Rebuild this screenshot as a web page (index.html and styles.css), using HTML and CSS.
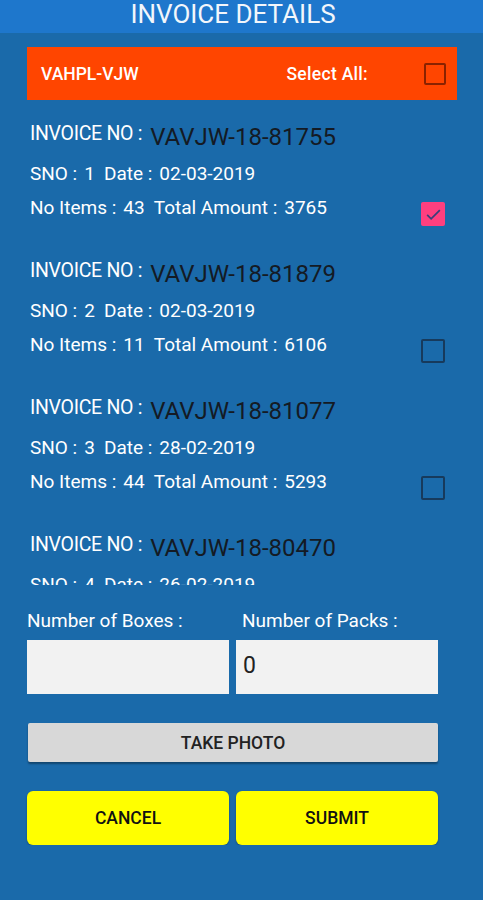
FILE: index.html
```html
<!DOCTYPE html>
<html lang="en">
<head>
    <meta charset="UTF-8">
    <meta name="viewport" content="width=device-width, initial-scale=1.0">
    <title>Invoice Details</title>
    <link rel="stylesheet" href="styles.css">
</head>
<body>
    <div class="header">
        <h1>INVOICE DETAILS</h1>
    </div>

    <div class="page">
        <div class="branch-bar">
            <span class="branch">VAHPL-VJW</span>
            <span class="select-all">Select All:</span>
            <span class="check check-dark"></span>
        </div>

        <div class="invoice-list">
            <div class="invoice">
                <div class="info">
                    <div class="row-no"><span class="label">INVOICE NO :</span><span class="number">VAVJW-18-81755</span></div>
                    <div class="row"><span>SNO :</span><span>1</span><span>Date :</span><span>02-03-2019</span></div>
                    <div class="row"><span>No Items :</span><span>43</span><span>Total Amount :</span><span>3765</span></div>
                </div>
                <span class="check check-on">
                    <svg viewBox="0 0 24 24" width="19" height="19"><path d="M4 12.5l5 5 11-11" fill="none" stroke="#3a3f7a" stroke-width="2.2"/></svg>
                </span>
            </div>
            <div class="invoice">
                <div class="info">
                    <div class="row-no"><span class="label">INVOICE NO :</span><span class="number">VAVJW-18-81879</span></div>
                    <div class="row"><span>SNO :</span><span>2</span><span>Date :</span><span>02-03-2019</span></div>
                    <div class="row"><span>No Items :</span><span>11</span><span>Total Amount :</span><span>6106</span></div>
                </div>
                <span class="check"></span>
            </div>
            <div class="invoice">
                <div class="info">
                    <div class="row-no"><span class="label">INVOICE NO :</span><span class="number">VAVJW-18-81077</span></div>
                    <div class="row"><span>SNO :</span><span>3</span><span>Date :</span><span>28-02-2019</span></div>
                    <div class="row"><span>No Items :</span><span>44</span><span>Total Amount :</span><span>5293</span></div>
                </div>
                <span class="check"></span>
            </div>
            <div class="invoice">
                <div class="info">
                    <div class="row-no"><span class="label">INVOICE NO :</span><span class="number">VAVJW-18-80470</span></div>
                    <div class="row"><span>SNO :</span><span>4</span><span>Date :</span><span>26-02-2019</span></div>
                    <div class="row"><span>No Items :</span><span>38</span><span>Total Amount :</span><span>4410</span></div>
                </div>
                <span class="check"></span>
            </div>
        </div>

        <div class="fields">
            <div class="field">
                <label for="boxes">Number of Boxes :</label>
                <input type="text" id="boxes">
            </div>
            <div class="field field-right">
                <label for="packs">Number of Packs :</label>
                <input type="text" id="packs" value="0">
            </div>
        </div>

        <button class="photo-btn">TAKE PHOTO</button>

        <div class="actions">
            <button class="yellow-btn">CANCEL</button>
            <button class="yellow-btn">SUBMIT</button>
        </div>
    </div>
</body>
</html>
```

FILE: styles.css
```css
body {
    margin: 0;
    background-color: #1a6aaa;
    font-family: Roboto, "Noto Sans", sans-serif;
    color: #fff;
}

.header {
    height: 33px;
    background-color: #1e77cc;
    text-align: center;
}

.header h1 {
    margin: 0;
    padding-right: 17px;
    font-size: 26px;
    font-weight: 400;
    line-height: 28px;
    color: #f2f6fb;
}

.page {
    padding: 14px 0 0 27px;
}

.branch-bar {
    display: flex;
    align-items: center;
    width: 430px;
    height: 53px;
    box-sizing: border-box;
    padding: 0 11px 0 14px;
    background-color: #ff4500;
    font-size: 17.5px;
    font-weight: 500;
}

.branch {
    flex: 1;
}

.select-all {
    margin-right: 56px;
    letter-spacing: 0.3px;
}

.check {
    display: flex;
    align-items: center;
    justify-content: center;
    width: 20px;
    height: 20px;
    border: 2px solid #173a5c;
    border-radius: 2px;
}

.check-dark {
    width: 18px;
    height: 18px;
    border-color: #8a2200;
}

.check-on {
    width: 24px;
    height: 24px;
    border: none;
    background-color: #ff3f7f;
}

.invoice-list {
    height: 473px;
    margin-top: 12px;
    overflow: hidden;
}

.invoice {
    display: flex;
    align-items: flex-start;
    height: 137px;
    width: 418px;
}

.info {
    flex: 1;
    padding: 11px 0 0 3px;
}

.row-no {
    display: flex;
    align-items: flex-start;
    height: 40px;
}

.label {
    font-size: 19.5px;
    line-height: 22px;
    margin-right: 8px;
    letter-spacing: -0.3px;
}

.number {
    font-size: 24px;
    line-height: 28px;
    color: #141a24;
}

.row {
    display: flex;
    gap: 7px;
    height: 34px;
    font-size: 19px;
    line-height: 22px;
}

.row span:nth-child(2) {
    margin-right: 2px;
}

.invoice .check {
    margin-top: 90px;
}

.fields {
    display: flex;
    gap: 7px;
    margin-top: 25px;
}

.field {
    display: flex;
    flex-direction: column;
    width: 202px;
}

.field label {
    font-size: 19px;
    line-height: 22px;
    margin-bottom: 8px;
}

.field-right label {
    padding-left: 6px;
}

.field input {
    height: 54px;
    box-sizing: border-box;
    border: none;
    padding: 0 7px 4px;
    background-color: #f2f2f2;
    font-family: Roboto, sans-serif;
    font-size: 23px;
    color: #222;
}

.photo-btn {
    display: block;
    width: 410px;
    height: 39px;
    margin: 29px 0 0 1px;
    border: none;
    border-radius: 2px;
    background-color: #d8d8d8;
    box-shadow: 0 2px 2px rgba(0, 0, 0, 0.35);
    font-family: Roboto, sans-serif;
    font-size: 17.5px;
    font-weight: 500;
    color: #222;
}

.actions {
    display: flex;
    gap: 7px;
    margin-top: 29px;
}

.yellow-btn {
    width: 202px;
    height: 54px;
    border: none;
    border-radius: 6px;
    background-color: #ffff00;
    font-family: Roboto, sans-serif;
    font-size: 17.5px;
    font-weight: 500;
    color: #111;
    box-shadow: 0 1px 2px rgba(0, 0, 0, 0.3);
}
```
